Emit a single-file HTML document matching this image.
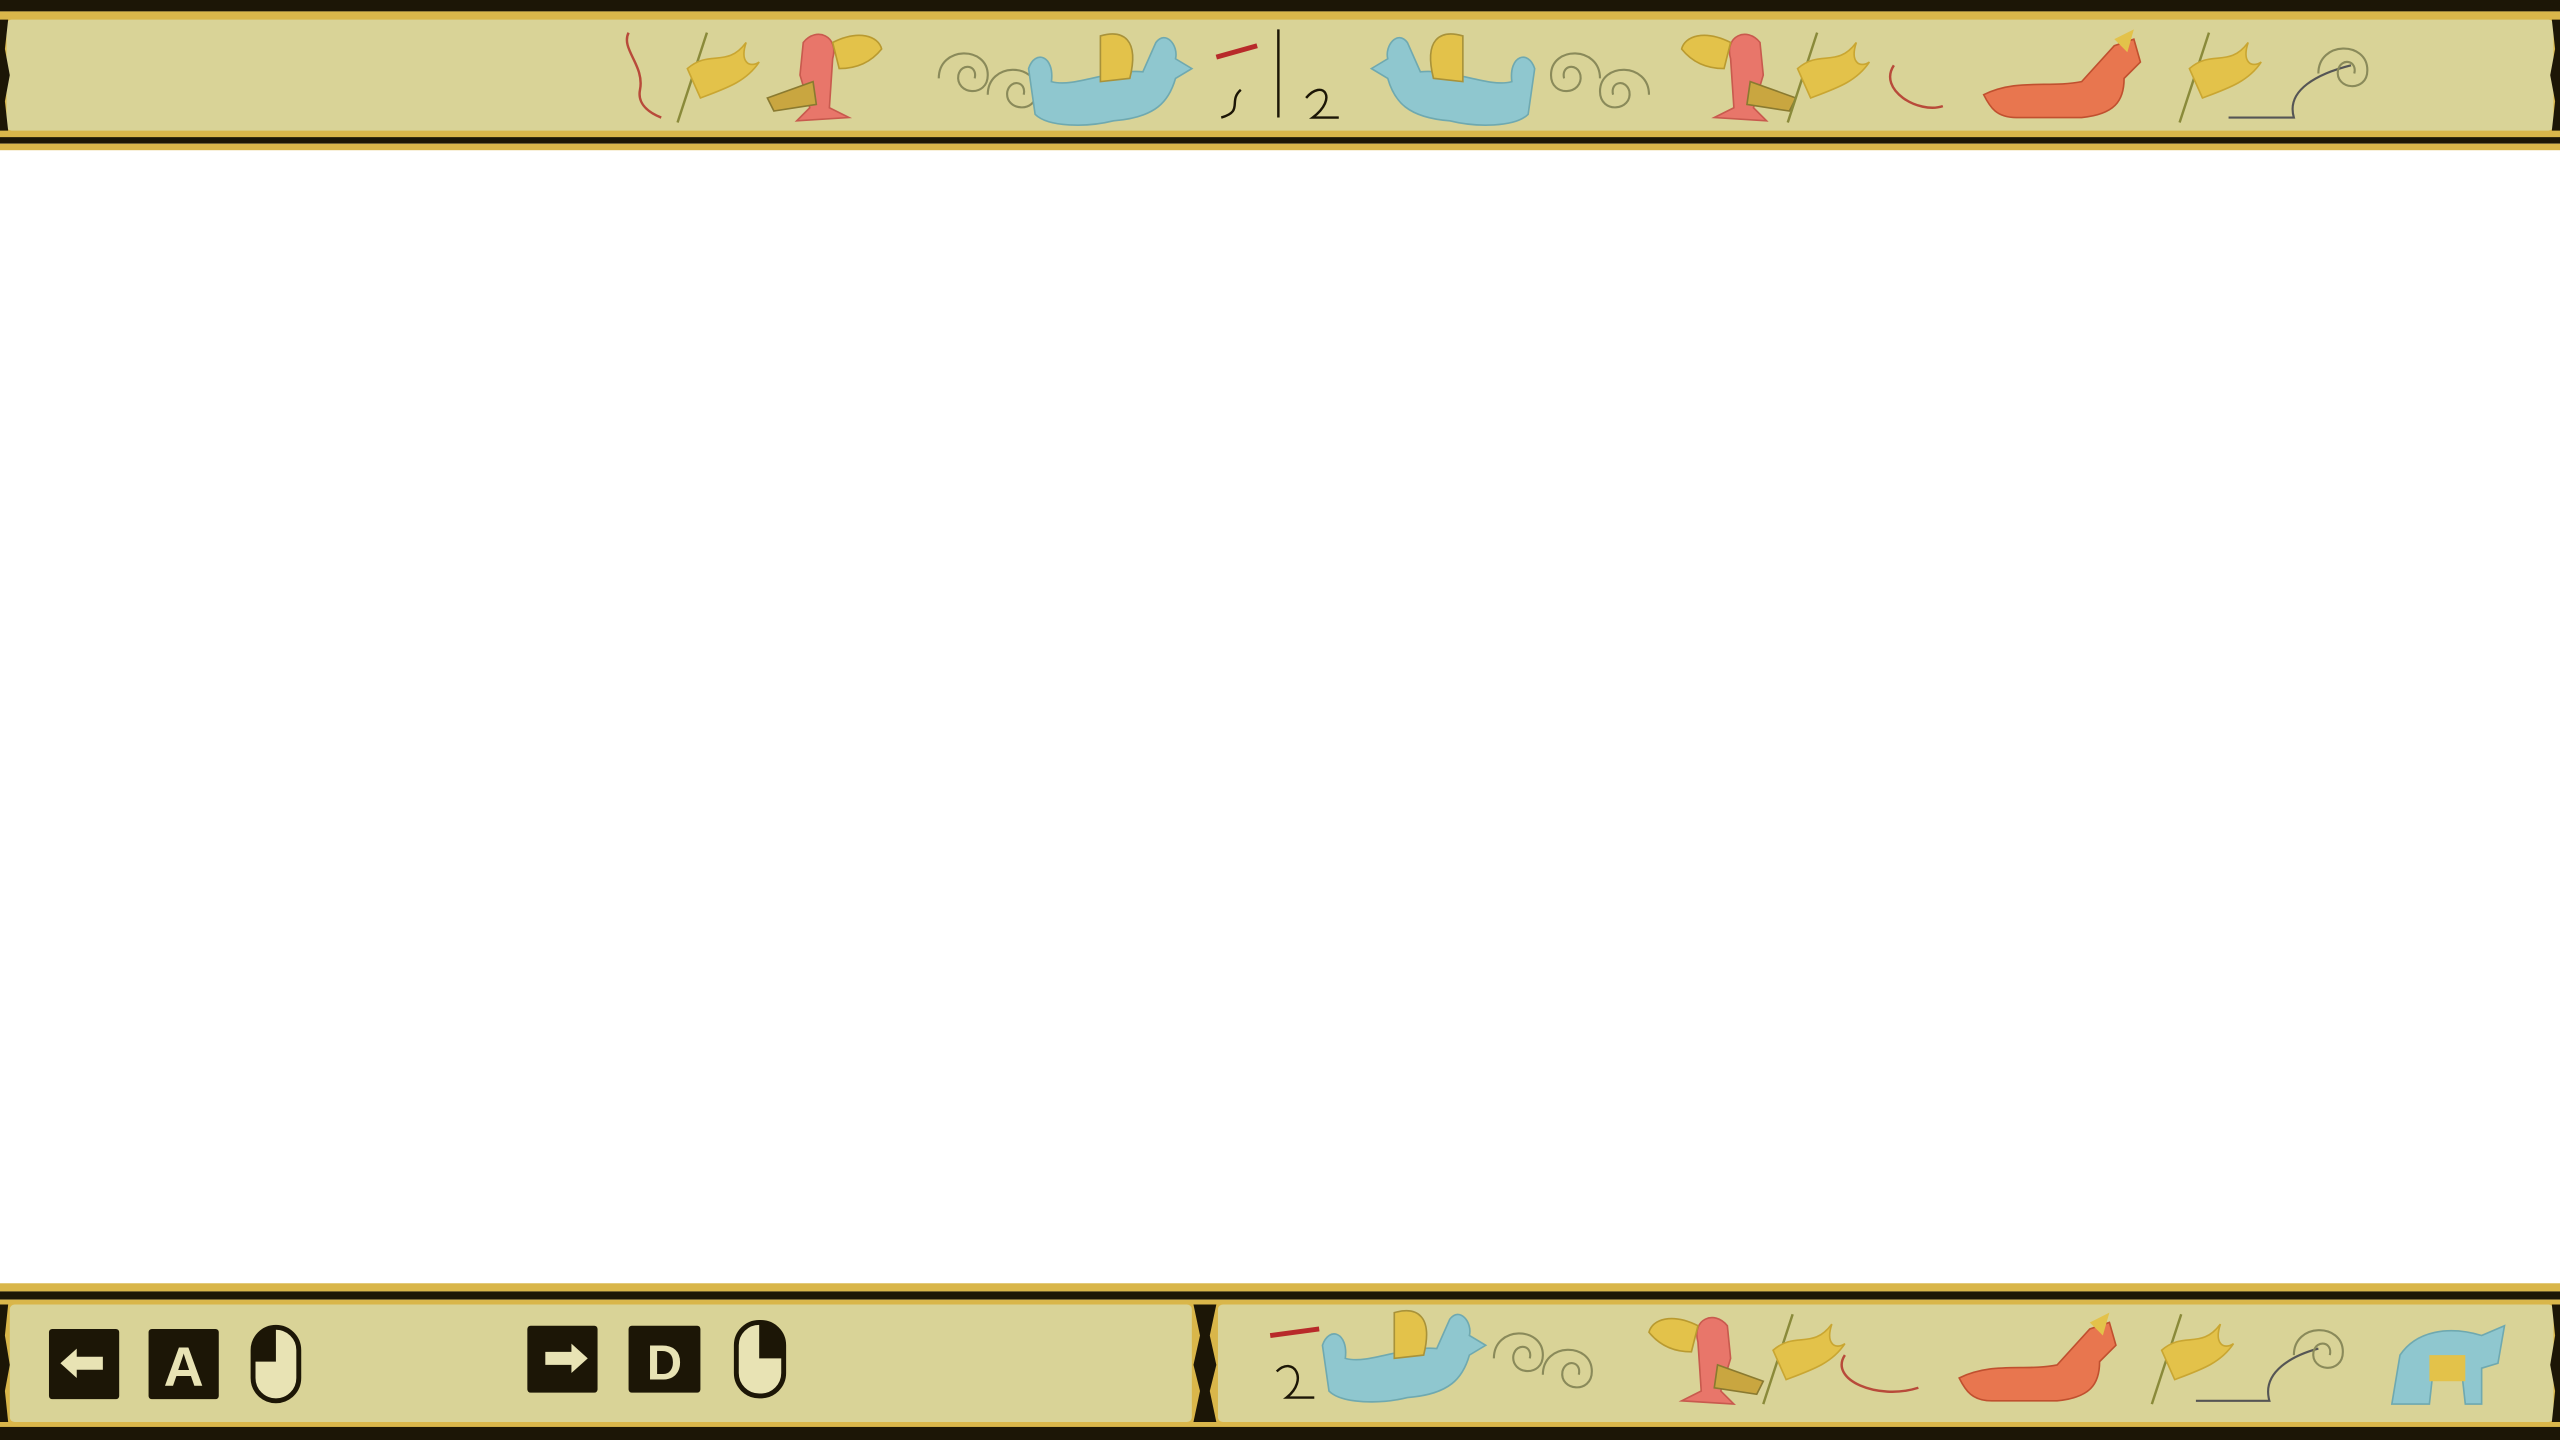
<!DOCTYPE html>
<html><head><meta charset="utf-8"><style>
html,body{margin:0;padding:0;width:2560px;height:1440px;overflow:hidden;background:#fff}
svg{position:absolute;left:0;top:0}
</style></head><body>
<svg width="2560" height="1440" viewBox="0 0 1568 882" preserveAspectRatio="none">
<defs>
<g id="flag"><path d="M0 55 L18 0" stroke="#8a8a3a" stroke-width="1.5" fill="none"/><path d="M6 22 C20 10 30 22 42 6 C38 18 44 22 50 18 C42 30 30 34 14 40 Z" fill="#e3c24a" stroke="#c9a632"/></g>
<g id="bird"><path d="M22 10 C30 0 44 6 40 20 L38 50 L50 56 L18 58 L26 50 L20 30 Z" fill="#e8766a" stroke="#c85a4e"/><path d="M40 10 C56 2 68 6 70 14 C62 24 52 26 44 26 Z" fill="#e3c24a" stroke="#b99a30"/><path d="M0 44 L28 34 L30 48 L4 52 Z" fill="#c9a640" stroke="#8a7a30"/></g>
<g id="blue"><path d="M0 24 C4 12 16 16 14 32 C28 36 50 24 70 26 L78 8 C84 0 92 10 90 18 L100 24 L90 30 C86 44 78 54 52 56 C36 60 12 60 4 52 Z" fill="#8fc7cf" stroke="#6fa9b0"/><path d="M44 4 C58 0 68 6 62 30 L44 32 Z" fill="#e3c24a" stroke="#a8923a"/></g>
<g id="dragon"><path d="M0 40 C20 30 40 36 60 32 L80 10 L92 6 L96 20 L86 30 C86 44 80 52 60 54 L20 54 C8 54 4 48 0 40 Z" fill="#e8764f" stroke="#c0502f"/><path d="M80 6 L92 0 L88 14 Z" fill="#e3c24a"/></g>
<g id="swirl"><path d="M0 20 C0 0 30 0 30 18 C30 32 10 30 12 18 C14 10 24 12 22 20" stroke="#8a8a5a" stroke-width="1.3" fill="none"/></g>
</defs>
<rect x="0" y="0" width="1568" height="7" fill="#1c1606"/>
<rect x="0" y="7" width="1568" height="78" fill="#d9b64a"/>
<rect x="4" y="12" width="1560" height="68" rx="3" fill="#d9d397"/>
<rect x="0" y="84" width="1568" height="4" fill="#1c1606"/>
<rect x="0" y="88" width="1568" height="4" fill="#d9b64a"/>
<path d="M0 12 L5 12 L3 30 L6 46 L3 62 L5 80 L0 80 Z" fill="#1c1606"/>
<path d="M1568 12 L1563 12 L1565 30 L1562 46 L1565 62 L1563 80 L1568 80 Z" fill="#1c1606"/>
<path d="M385 20 C380 30 395 40 392 55 C390 65 400 70 405 72" stroke="#b84a3a" stroke-width="1.5" fill="none"/>
<use href="#flag" x="415" y="20"/>
<use href="#bird" x="470" y="16"/>
<use href="#swirl" x="575" y="28"/>
<use href="#swirl" x="605" y="38"/>
<use href="#blue" x="630" y="18"/>
<path d="M745 35 L770 28" stroke="#b82a2a" stroke-width="3"/>
<path d="M760 55 C752 62 762 68 748 72 M783 18 L783 72" stroke="#1c1606" stroke-width="1.5" fill="none"/>
<g transform="translate(1770,0) scale(-1,1)"><use href="#blue" x="830" y="18"/><use href="#swirl" x="790" y="28"/><use href="#swirl" x="760" y="38"/></g>
<path d="M800 60 C810 48 820 60 804 72 L820 72" stroke="#1c1606" stroke-width="1.5" fill="none"/>
<g transform="translate(2100,0) scale(-1,1)"><use href="#bird" x="1000" y="16"/></g>
<use href="#flag" x="1095" y="20"/>
<path d="M1160 40 C1150 55 1175 70 1190 65" stroke="#b84a3a" stroke-width="1.5" fill="none"/>
<use href="#dragon" x="1215" y="18"/>
<use href="#flag" x="1335" y="20"/>
<path d="M1365 72 L1405 72 C1400 55 1420 45 1440 40" stroke="#555" stroke-width="1.3" fill="none"/>
<use href="#swirl" x="1420" y="25"/>
<rect x="0" y="786" width="1568" height="5" fill="#d9b64a"/>
<rect x="0" y="791" width="1568" height="5" fill="#1c1606"/>
<rect x="0" y="796" width="1568" height="80" fill="#d9b64a"/>
<rect x="0" y="874" width="1568" height="8" fill="#1c1606"/>
<rect x="6" y="799" width="724" height="72" rx="3" fill="#d9d397"/>
<rect x="746" y="799" width="818" height="72" rx="3" fill="#d9d397"/>
<path d="M0 799 L5 799 L3 818 L6 836 L3 852 L5 871 L0 871 Z" fill="#1c1606"/>
<path d="M731 799 L745 799 L741 818 L745 836 L741 852 L745 871 L731 871 L735 852 L731 836 L735 818 Z" fill="#1c1606"/>
<path d="M1568 799 L1563 799 L1565 818 L1562 836 L1565 852 L1563 871 L1568 871 Z" fill="#1c1606"/>
<rect x="30" y="814" width="43" height="43" rx="2" fill="#1c1606"/>
<path d="M37 835 L47 826 L47 831 L63 831 L63 839 L47 839 L47 844 Z" fill="#e8e3b4"/>
<rect x="91" y="814" width="43" height="43" rx="2" fill="#1c1606"/>
<text x="112.5" y="849" text-anchor="middle" font-family="Liberation Sans, sans-serif" font-weight="bold" font-size="34" fill="#e8e3b4">A</text>
<rect x="155" y="813" width="28" height="45" rx="14" fill="#e8e3b4" stroke="#1c1606" stroke-width="3"/>
<path d="M169 813 A14 14 0 0 0 155 827 L155 834 L169 834 Z" fill="#1c1606"/>
<rect x="323" y="812" width="43" height="41" rx="2" fill="#1c1606"/>
<path d="M360 832 L350 823 L350 828 L334 828 L334 836 L350 836 L350 841 Z" fill="#e8e3b4"/>
<rect x="385" y="812" width="44" height="41" rx="2" fill="#1c1606"/>
<text x="407" y="845" text-anchor="middle" font-family="Liberation Sans, sans-serif" font-weight="bold" font-size="30" fill="#e8e3b4">D</text>
<rect x="451" y="810" width="29" height="45" rx="14" fill="#e8e3b4" stroke="#1c1606" stroke-width="3"/>
<path d="M465 810 A14 14 0 0 1 480 824 L480 832 L465 832 Z" fill="#1c1606"/>
<path d="M778 818 L808 814" stroke="#b82a2a" stroke-width="3"/>
<path d="M782 840 C792 830 802 845 788 856 L805 856" stroke="#1c1606" stroke-width="1.5" fill="none"/>
<use href="#blue" x="810" y="800"/>
<use href="#swirl" x="915" y="812"/>
<use href="#swirl" x="945" y="822"/>
<g transform="translate(2070,0) scale(-1,1)"><use href="#bird" x="990" y="802"/></g>
<use href="#flag" x="1080" y="805"/>
<path d="M1130 830 C1120 845 1150 858 1175 850" stroke="#b84a3a" stroke-width="1.5" fill="none"/>
<use href="#dragon" x="1200" y="804"/>
<use href="#flag" x="1318" y="805"/>
<path d="M1345 858 L1390 858 C1385 840 1405 830 1420 826" stroke="#555" stroke-width="1.3" fill="none"/>
<use href="#swirl" x="1405" y="810"/>
<path d="M1465 860 L1470 830 C1480 815 1500 812 1520 818 L1534 812 L1530 835 L1520 838 L1520 860 L1510 860 L1508 842 L1490 842 L1488 860 Z" fill="#8fc7cf" stroke="#6fa9b0"/>
<rect x="1488" y="830" width="22" height="16" fill="#e3c24a"/>
</svg>
</body></html>
